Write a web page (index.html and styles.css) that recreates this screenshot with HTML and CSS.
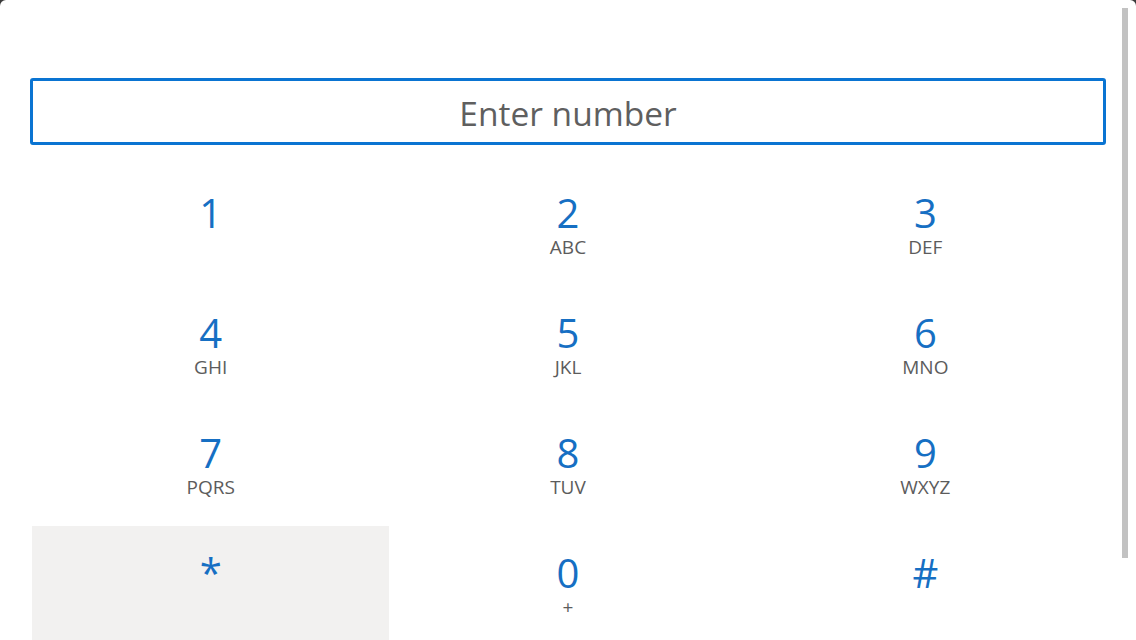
FILE: index.html
```html
<!DOCTYPE html>
<html lang="en">
<head>
<meta charset="utf-8">
<title>Dial pad</title>
<link rel="stylesheet" href="styles.css">
</head>
<body>
<div class="window">
  <div class="number-field"><span class="placeholder">Enter number</span></div>
  <div class="keypad">
    <div class="key"><span class="digit">1</span><span class="letters"></span></div>
    <div class="key"><span class="digit">2</span><span class="letters">ABC</span></div>
    <div class="key"><span class="digit">3</span><span class="letters">DEF</span></div>
    <div class="key"><span class="digit">4</span><span class="letters">GHI</span></div>
    <div class="key"><span class="digit">5</span><span class="letters">JKL</span></div>
    <div class="key"><span class="digit">6</span><span class="letters">MNO</span></div>
    <div class="key"><span class="digit">7</span><span class="letters">PQRS</span></div>
    <div class="key"><span class="digit">8</span><span class="letters">TUV</span></div>
    <div class="key"><span class="digit">9</span><span class="letters">WXYZ</span></div>
    <div class="key key-hover"><span class="digit">*</span><span class="letters"></span></div>
    <div class="key"><span class="digit">0</span><span class="letters">+</span></div>
    <div class="key"><span class="digit">#</span><span class="letters"></span></div>
  </div>
  <div class="scrollbar"></div>
</div>
</body>
</html>
```

FILE: styles.css
```css
html, body {
  margin: 0;
  padding: 0;
  height: 100%;
  overflow: hidden;
  background: #3a3a3a;
}

.window {
  position: relative;
  box-sizing: border-box;
  height: 640px;
  background: #ffffff;
  border-radius: 6px 6px 0 0;
  padding: 78px 30px 0 30px;
  font-family: "Open Sans", "Noto Sans", sans-serif;
}

.number-field {
  box-sizing: border-box;
  height: 67px;
  width: 1076px;
  border: 3px solid #0a74d2;
  border-radius: 3px;
  display: flex;
  align-items: center;
  justify-content: center;
}

.placeholder {
  font-size: 33.5px;
  color: #5f5f5f;
  line-height: 40px;
  padding-top: 2px;
}

.keypad {
  margin: 21px 0 0 2px;
  width: 1072px;
  display: grid;
  grid-template-columns: repeat(3, 1fr);
  grid-auto-rows: 120px;
}

.key {
  display: flex;
  flex-direction: column;
  align-items: center;
  padding-top: 27px;
  box-sizing: border-box;
}

.key-hover {
  background: #f2f1f0;
}

.digit {
  font-size: 40px;
  line-height: 40px;
  color: #166fc3;
}

.letters {
  margin-top: 3px;
  font-size: 19px;
  line-height: 22px;
  height: 22px;
  color: #5c5c5c;
}

.scrollbar {
  position: absolute;
  top: 8px;
  right: 8px;
  width: 6px;
  height: 550px;
  background: #c2c2c2;
}
```
